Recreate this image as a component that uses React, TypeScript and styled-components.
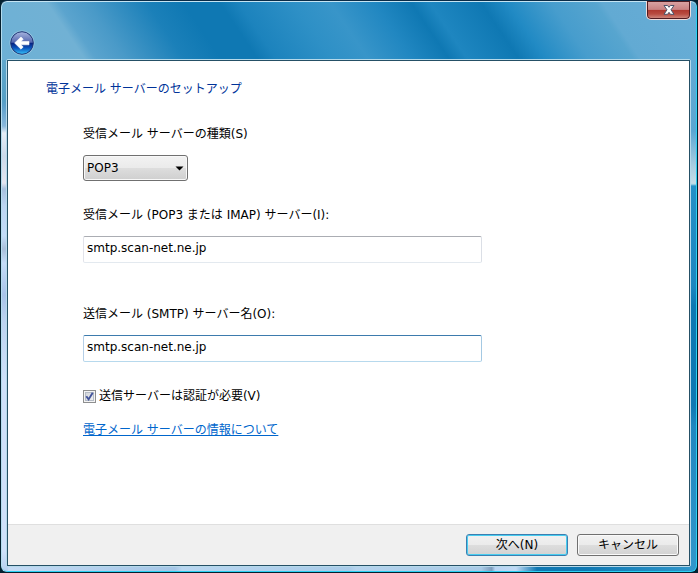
import React from "react";
import styled, { createGlobalStyle, css } from "styled-components";

const GlobalStyle = createGlobalStyle`
  *, *::before, *::after { box-sizing: border-box; }
  body {
    margin: 0;
    background: #04202f;
    color: #000;
    font-family: "DejaVu Sans", "Noto Sans CJK JP", sans-serif;
    font-size: 12px;
    line-height: 18px;
  }
  button, input, select { font: inherit; color: inherit; margin: 0; }
`;

const Window = styled.div`
  min-height: 100vh;
  display: flex;
  flex-direction: column;
  padding: 0 6px 5px 5px;
  border: 1px solid #04202f;
  border-top-color: #0a2c48;
  border-radius: 7px;
  box-shadow: inset 0 1px #c5e4f3, inset 1px 0 #b4dcee, inset -1px 0 #2bd0f2,
    inset 0 -1px #2bd0f2;
  background:
    linear-gradient(56deg, #6db1d6 0%, #71b1d4 11.5%, #5ba4ce 13%, #4a9ac8 17%,
      #1b80b9 25%, #0f78b3 30%, #0f78b3 35%, #1c83bd 37.5%, #2e90c6 45%,
      #3895c9 50%, #2187c1 56%, #0f78b3 61%, #1e86c0 63.5%, #0f78b3 70.5%,
      #218ac4 74%, #479dcd 80%, #57a5cf 86%, #62aad3 87%, #69add6 100%)
      top / 100% 59px no-repeat,
    linear-gradient(#6fb3d6 0, #559fc5 100px, #5b9fca 104px, #89b8dc 125px,
      #e6edf6 132px, #ccd9ea 155px, #e5e5f0 182px, #a8c0de 188px,
      #bdd5f2 205px, #c3dcf8 235px, #a9bfda 248px, #c5dcf8 262px,
      #a9c3e8 294px, #bdd3f0 320px, #cfe1fa 380px, #cfe1fa 550px, #b4cfef 100%)
      left / 7px 100% no-repeat,
    linear-gradient(#69add6 0, #5ba6d2 130px, #a9cee2 165px, #c5dde7 182px,
      #b4dbe8 183px, #2590c7 185px, #1d86c0 285px, #0f78b3 305px,
      #0f78b3 405px, #2187c0 425px, #3297cb 100%)
      right / 8px 100% no-repeat,
    linear-gradient(90deg, #c6dcf5 0, #a5c6e6 25%, #b9d6f0 26%, #a9cbe8 50%,
      #b5d3ed 51%, #a9cae6 69%, #7d9dbd 70.5%, #b8d4f3 71%, #bfd9f4 74%,
      #0f78b3 77%, #0f78b3 84%, #3297cb 100%);
`;

const TitleBar = styled.header`
  height: 58px;
  flex: none;
  display: flex;
  justify-content: space-between;
  align-items: flex-start;
`;

const BackButton = styled.button`
  width: 26px;
  height: 26px;
  margin: 29px 0 0 3px;
  padding: 0;
  border: 0;
  background: none;
  svg { display: block; }
`;

const CloseButton = styled.button`
  width: 45px;
  height: 19px;
  padding: 0;
  display: grid;
  place-items: center;
  border: 1px solid #f0dcdc;
  border-top: 0;
  border-radius: 0 0 5px 5px;
  box-shadow: inset 0 0 0 1px #501c22;
  background: linear-gradient(#dba6a6 0, #c98282 47%, #ae382f 50%, #b84b40 72%, #d29187 100%);
`;

const Panel = styled.div`
  flex: 1;
  display: flex;
  flex-direction: column;
  border: 1px solid #b5d9ea;
  border-radius: 2px;
`;

const Page = styled.div`
  flex: 1;
  display: flex;
  flex-direction: column;
  border: 1px solid #255066;
  background: #fff;
`;

const Main = styled.main`
  flex: 1;
  padding: 19px 38px;
`;

const Title = styled.h1`
  margin: 0;
  font-size: 12px;
  font-weight: 400;
  color: #003399;
`;

const Form = styled.form`
  display: flex;
  flex-direction: column;
  align-items: flex-start;
  gap: 25px;
  margin: 27px 0 0 37px;
`;

const Field = styled.div<{ $spaced?: boolean }>`
  width: 100%;
  display: flex;
  flex-direction: column;
  align-items: flex-start;
  gap: 12px;
  margin-top: ${(p) => (p.$spaced ? "17px" : "0")};
`;

const SelectBox = styled.div`
  display: grid;
  width: 105px;
  > * { grid-area: 1 / 1; }
  > svg { place-self: center end; margin-right: 4px; pointer-events: none; }
`;

const Select = styled.select`
  appearance: none;
  width: 100%;
  height: 26px;
  padding: 0 20px 0 3px;
  border: 1px solid #707070;
  border-radius: 3px;
  box-shadow: inset 0 0 0 1px #f8f8f8;
  background: linear-gradient(#f2f2f2 0, #ebebeb 48%, #dddddd 52%, #cfcfcf 100%);
`;

const TextInput = styled.input<{ $active?: boolean }>`
  width: 100%;
  max-width: 399px;
  height: 27px;
  padding: 0 3px 3px;
  border: 1px solid;
  border-radius: 2px;
  outline: 0;
  background: #fff;
  border-color: ${(p) =>
    p.$active ? "#3d7bad #a4c9e3 #b7d9ed #b5cfe7" : "#abadb3 #dbdfe6 #e3e9ef #e2e3ea"};
`;

const CheckLabel = styled.label`
  display: flex;
  align-items: center;
  gap: 3px;
`;

const CheckBox = styled.span`
  display: grid;
  > * { grid-area: 1 / 1; }
  > svg { pointer-events: none; visibility: hidden; }
  > input:checked + svg { visibility: visible; }
`;

const CheckInput = styled.input`
  appearance: none;
  width: 13px;
  height: 13px;
  border: 1px solid #8e8f8f;
  box-shadow: inset 0 0 0 1px #f4f4f4, inset 0 0 0 2px #b5bcc6;
  background: linear-gradient(135deg, #cbcfd5, #f6f6f6);
`;

const HelpLink = styled.a`
  color: #0066cc;
  margin-top: -9px;
`;

const Footer = styled.footer`
  display: flex;
  justify-content: flex-end;
  gap: 9px;
  padding: 9px 10px;
  border-top: 1px solid #dfdfdf;
  background: #f0f0f0;
`;

const defaultButton = css`
  border-color: #3c7fb1;
  box-shadow: inset 0 0 0 1px #48cdf0;
`;

const Button = styled.button<{ $default?: boolean }>`
  width: 102px;
  height: 22px;
  padding: 0;
  border: 1px solid #707070;
  border-radius: 3px;
  box-shadow: inset 0 0 0 1px #fafafa;
  background: linear-gradient(#f2f2f2 0, #ebebeb 48%, #dddddd 52%, #d2d2d2 100%);
  line-height: 20px;
  ${(p) => p.$default && defaultButton}
`;

const BackIcon = () => (
  <svg width="26" height="26" viewBox="0 0 26 26" aria-hidden="true">
    <defs>
      <linearGradient id="orb" x1="0" y1="0" x2="0" y2="1">
        <stop offset="0" stopColor="#a8b5df" />
        <stop offset="0.47" stopColor="#5568b0" />
        <stop offset="0.5" stopColor="#08217f" />
        <stop offset="0.72" stopColor="#0b55bd" />
        <stop offset="1" stopColor="#38c5fa" />
      </linearGradient>
    </defs>
    <circle cx="13" cy="13" r="12.5" fill="#b3d3e8" fillOpacity="0.6" />
    <circle cx="13" cy="13" r="11.3" fill="url(#orb)" stroke="#1d3576" />
    <path
      d="M5.6 13 L12 7 L14.2 9.2 L12 11.5 H20 V14.8 H12 L14.2 17 L12 19.2 Z"
      fill="#fff"
      stroke="#fff"
      strokeWidth="0.6"
      strokeLinejoin="round"
    />
  </svg>
);

const CloseIcon = () => (
  <svg width="14" height="12" viewBox="0 0 14 12" aria-hidden="true">
    <path
      d="M2 1.5 H5.6 L7 3.3 L8.4 1.5 H12 L9 5.8 L12 10.3 H8.4 L7 8.3 L5.6 10.3 H2 L5 5.8 Z"
      fill="#fff"
      stroke="#4c5369"
      strokeLinejoin="round"
    />
  </svg>
);

export default function App() {
  return (
    <>
      <GlobalStyle />
      <Window>
        <TitleBar>
          <BackButton type="button" aria-label="戻る">
            <BackIcon />
          </BackButton>
          <CloseButton type="button" aria-label="閉じる">
            <CloseIcon />
          </CloseButton>
        </TitleBar>
        <Panel>
          <Page>
            <Main>
              <Title>電子メール サーバーのセットアップ</Title>
              <Form id="server-form" onSubmit={(e) => e.preventDefault()}>
                <Field>
                  <label htmlFor="kind">受信メール サーバーの種類(S)</label>
                  <SelectBox>
                    <Select id="kind" defaultValue="POP3">
                      <option>POP3</option>
                      <option>IMAP</option>
                    </Select>
                    <svg width="9" height="5" viewBox="0 0 9 5" aria-hidden="true">
                      <path d="M0.5 0.5 H8.5 L4.5 4.5 Z" />
                    </svg>
                  </SelectBox>
                </Field>
                <Field>
                  <label htmlFor="incoming">受信メール (POP3 または IMAP) サーバー(I):</label>
                  <TextInput id="incoming" defaultValue="smtp.scan-net.ne.jp" />
                </Field>
                <Field $spaced>
                  <label htmlFor="outgoing">送信メール (SMTP) サーバー名(O):</label>
                  <TextInput id="outgoing" defaultValue="smtp.scan-net.ne.jp" $active />
                </Field>
                <CheckLabel>
                  <CheckBox>
                    <CheckInput type="checkbox" defaultChecked />
                    <svg width="13" height="13" viewBox="0 0 13 13" aria-hidden="true">
                      <path
                        d="M3.3 6.2 L5.6 9.4 L9.7 2.8"
                        fill="none"
                        stroke="#42539b"
                        strokeWidth="1.9"
                      />
                    </svg>
                  </CheckBox>
                  送信サーバーは認証が必要(V)
                </CheckLabel>
                <HelpLink href="#server-info">電子メール サーバーの情報について</HelpLink>
              </Form>
            </Main>
            <Footer>
              <Button type="submit" form="server-form" $default>
                次へ(N)
              </Button>
              <Button type="button">キャンセル</Button>
            </Footer>
          </Page>
        </Panel>
      </Window>
    </>
  );
}
